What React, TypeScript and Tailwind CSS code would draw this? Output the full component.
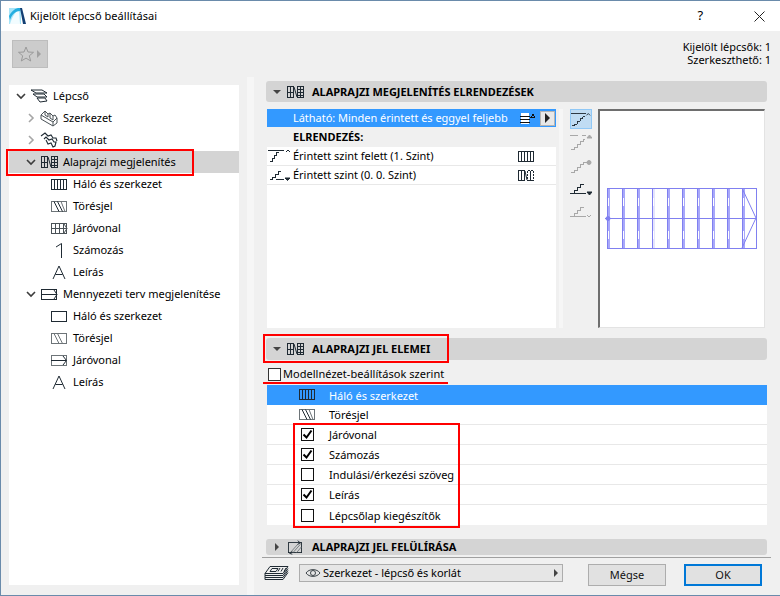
import React from "react";

const ink = "#1f2a33";

const Chevron = ({ open, light }: { open?: boolean; light?: boolean }) => (
  <svg width="10" height="10" viewBox="0 0 10 10" fill="none" stroke={light ? "#a6a6a6" : "#3c3c3c"} strokeWidth="1.6">
    {open ? <path d="M1 3 L5 7 L9 3" /> : <path d="M3 1 L7 5 L3 9" />}
  </svg>
);

const PlanIcon = () => (
  <svg width="17" height="14" viewBox="0 0 17 14" fill="none" stroke={ink} shapeRendering="crispEdges">
    <path d="M.5 1.5h6v11h-6zM.5 7.5h6M3.5 1.5v11M10.5 1.5h6v11h-6zM10.500 4.500h6M10.500 7.500h6M10.500 10.500h6M13.500 1.500v11" />
    <path d="M7 2 L10 12" shapeRendering="auto" />
  </svg>
);

const GridIcon = () => (
  <svg width="16" height="11" viewBox="0 0 16 11" fill="none" stroke={ink} shapeRendering="crispEdges">
    <path d="M.5.5h15v10H.5zM3.500.5v10M6.500.5v10M9.500.5v10M12.500.5v10" />
  </svg>
);

const BreakIcon = ({ dim }: { dim?: boolean }) => (
  <svg width="16" height="11" viewBox="0 0 16 11" fill="none" stroke="#6d7478">
    <path d="M.5.5h15v10H.5z" shapeRendering="crispEdges" />
    <path d="M3 .5 L8 10.500M6.500 .5 L11.500 10.500" stroke={dim ? "#6d7478" : ink} />
    {!dim && <path d="M10 .5 L14 10.500" />}
  </svg>
);

const WalkIcon = () => (
  <svg width="17" height="11" viewBox="0 0 17 11" fill="none" stroke="#4a5257" shapeRendering="crispEdges">
    <path d="M.5.5h15v10H.5zM4.500.5v10M8.500.5v10M12.500.5v10M0 5.500h16" />
    <path d="M13 1 L16 5.500 L13 10" shapeRendering="auto" />
  </svg>
);

const NumIcon = () => (
  <svg width="16" height="15" viewBox="0 0 16 15" fill="none" stroke={ink}>
    <path d="M10.500 .5 V15M10.500 .5 L5 4" />
  </svg>
);

const LetterIcon = () => (
  <svg width="14" height="14" viewBox="0 0 14 14" fill="none" stroke={ink}>
    <path d="M1 14 L7 1 L13 14M3.400 9.500h7.200" />
  </svg>
);

const CeilIcon = () => (
  <svg width="17" height="11" viewBox="0 0 17 11" fill="none" stroke={ink} shapeRendering="crispEdges">
    <path d="M.5.5h15v10H.5zM.5 5.500h15" />
    <path d="M13 1 L16 5.500 L13 10" shapeRendering="auto" />
  </svg>
);

const RectIcon = () => (
  <svg width="16" height="11" viewBox="0 0 16 11" fill="none" stroke={ink} shapeRendering="crispEdges">
    <path d="M.5.5h15v10H.5z" />
  </svg>
);

const ArrowLineIcon = () => (
  <svg width="16" height="11" viewBox="0 0 16 11" fill="none" stroke={ink}>
    <path d="M.5.5h15v10H.5z" stroke="#6d7478" shapeRendering="crispEdges" />
    <path d="M0 5.500h15" shapeRendering="crispEdges" />
    <path d="M12 1 L15.500 5.500 L12 10" />
  </svg>
);

const StairRootIcon = () => (
  <svg width="18" height="15" viewBox="0 0 18 15" fill="none" stroke={ink}>
    <path d="M1 1 L12 1 L17 4 L6 4 ZM3 5 L14 5 L17 8 L7 8 ZM7 9 L15 9 L17 12 L10 13 Z" />
  </svg>
);

const StructureIcon = () => (
  <svg width="18" height="17" viewBox="0 0 18 17" fill="none" stroke="#4a5257">
    <path d="M1 5 L5 1 L8 4 L10 3 L13 6 L15 5 L17 8 L17 13 L13 16 L1 9 Z" />
    <path d="M1 5 L13 12 L17 8M13 12 L13 16M5 1 L5 5 L8 7 L8 4M10 3 L10 8 L13 10 L13 6" />
  </svg>
);

const CoverIcon = () => (
  <svg width="18" height="16" viewBox="0 0 18 16" fill="none" stroke={ink} strokeWidth="1.1">
    <path d="M1 4 L5 1 L8 4 L11 3 L13 6 L16 6 L17 9M4 7 L6 5 L9 8 L12 7 L14 10 L16 10 L15 14 L13 15 L11 11 L8 12 L6 8" />
  </svg>
);

const StackIcon = () => (
  <svg width="25" height="15" viewBox="0 0 25 15" fill="none" stroke={ink}>
    <path d="M6 .5h18l-5 7H1z" />
    <path d="M1 7.500v2h18l5-7M1 9.500v2h18l5-7M1 11.500v2h18l5-7" />
    <path d="M8 2.500h6l-2 3H6z" />
    <path d="M16 2 l-2 3.500M19 2 l-2 3.500M22 2 l-2 3.500" />
  </svg>
);

const OverrideIcon = () => (
  <svg width="20" height="16" viewBox="0 0 20 16" fill="none" stroke={ink}>
    <path d="M2.500 3.500h15v11h-15z" shapeRendering="crispEdges" />
    <path d="M8 14 L16 5M12 14 L17 8M5 14 L14 4" stroke="#70777b" />
    <path d="M13 1 L16 3.500 L13 5M7 13 L4 15 L7 16" />
  </svg>
);

const Eye = () => (
  <svg width="16" height="10" viewBox="0 0 16 10" fill="none" stroke="#3c4449">
    <path d="M1 5 C4 .5 12 .5 15 5 C12 9.500 4 9.500 1 5 Z" />
    <circle cx="8" cy="5" r="2.500" />
  </svg>
);

const StairTool = ({ color, line, mark }: { color: string; line: "top" | "bottom" | "split" | "mid"; mark: "up" | "upFill" | "dot" | "downFill" | "down" }) => (
  <svg width="22" height="18" viewBox="0 0 22 18" fill="none" stroke={color} shapeRendering="crispEdges">
    <path d={line === "bottom" ? "M1 14.500 h3 v-3 h3 v-3 h3 v-3 h4" : "M1 16.500 h3 v-2 h3 v-3 h3 v-3 h3 v-2 h2"} />
    {line === "top" && <path d="M0 2.500 h16" />}
    {line === "split" && <path d="M0 2.500 h8 M12 2.500 h4" />}
    {line === "mid" && <path d="M14 6.500 h5" />}
    {line === "bottom" && <path d="M0 14.500 h16" />}
    {mark === "up" && <path d="M17 5 l2 -2 l2 2" shapeRendering="auto" />}
    {mark === "upFill" && <path d="M17 5 h5 l-2.500 -3 z" fill={color} shapeRendering="auto" />}
    {mark === "dot" && <circle cx="19" cy="6.500" r="2" fill={color} shapeRendering="auto" />}
    {mark === "downFill" && <path d="M17 13 h5 l-2.500 3 z" fill={color} shapeRendering="auto" />}
    {mark === "down" && <path d="M17 13 l2 2 l2 -2" shapeRendering="auto" />}
  </svg>
);

const Plan = () => {
  const xs = [0, 15, 30, 45, 60, 75, 90, 105, 120, 135];
  return (
    <svg width="160" height="70" viewBox="-4 -4 160 70" fill="none" stroke="#8080f0" shapeRendering="crispEdges">
      {xs.map((x) => (
        <g key={x}>
          <rect x={x} y={0} width={3} height={61} fill={x === 45 ? "#e4e4fc" : "#a8a8fa"} stroke="none" />
          <path d={`M${x + 0.5} .5v60`} />
          <path d={`M${x + 1.5} 10v8M${x + 1.5} 43v8`} stroke="#fff" />
        </g>
      ))}
      <path d="M.5 .5h149v60H.5z" />
      <path d="M-2 30.500h152" />
      <path d="M135 0 L149 30 L135 60" shapeRendering="auto" />
      <circle cx="1" cy="30.500" r="2" fill="#8080f0" shapeRendering="auto" />
    </svg>
  );
};

const StarIcon = () => (
  <svg width="16" height="16" viewBox="0 0 16 16" fill="none" stroke="#9a9a9a">
    <path d="M8 1 L10 6 L15.500 6.300 L11.300 9.800 L12.700 15 L8 12.100 L3.300 15 L4.700 9.800 L.5 6.300 L6 6 Z" />
  </svg>
);

const tree: { label: string; indent: number; chevron?: "open" | "closed"; light?: boolean; icon: React.ReactNode; active?: boolean }[] = [
  { label: "Lépcső", indent: 7, chevron: "open", icon: <StairRootIcon /> },
  { label: "Szerkezet", indent: 17, chevron: "closed", light: true, icon: <StructureIcon /> },
  { label: "Burkolat", indent: 17, chevron: "closed", light: true, icon: <CoverIcon /> },
  { label: "Alaprajzi megjelenítés", indent: 17, chevron: "open", icon: <PlanIcon />, active: true },
  { label: "Háló és szerkezet", indent: 27, icon: <GridIcon /> },
  { label: "Törésjel", indent: 27, icon: <BreakIcon /> },
  { label: "Járóvonal", indent: 27, icon: <WalkIcon /> },
  { label: "Számozás", indent: 27, icon: <NumIcon /> },
  { label: "Leírás", indent: 27, icon: <LetterIcon /> },
  { label: "Mennyezeti terv megjelenítése", indent: 17, chevron: "open", icon: <CeilIcon /> },
  { label: "Háló és szerkezet", indent: 27, icon: <RectIcon /> },
  { label: "Törésjel", indent: 27, icon: <BreakIcon dim /> },
  { label: "Járóvonal", indent: 27, icon: <ArrowLineIcon /> },
  { label: "Leírás", indent: 27, icon: <LetterIcon /> },
];

const SectionHeader = ({ title, open, icon, className }: { title: string; open?: boolean; icon: React.ReactNode; className?: string }) => (
  <div className={`flex items-center bg-[#d4d4d4] rounded-[3px] ${className ?? ""}`}>
    <span className="w-[9px] ml-[6px] flex justify-center">
      {open ? <span className="border-x-[4px] border-x-transparent border-t-[4px] border-t-[#444]" /> : <span className="border-y-[4px] border-y-transparent border-l-[4px] border-l-[#444]" />}
    </span>
    <span className="w-[18px] ml-[5px] flex justify-center">{icon}</span>
    <span className="ml-[8px] font-bold text-[11px] text-black">{title}</span>
  </div>
);

const CheckBox = ({ checked }: { checked?: boolean }) => (
  <span className="w-[13px] h-[13px] border border-[#111] bg-white flex items-center justify-center">
    {checked && (
      <svg width="11" height="11" viewBox="0 0 11 11" fill="none" stroke="#000" strokeWidth="2">
        <path d="M1.500 5.500 L4.500 8.500 L9.500 1.500" />
      </svg>
    )}
  </span>
);

const marks = [
  { label: "Járóvonal", checked: true },
  { label: "Számozás", checked: true },
  { label: "Indulási/érkezési szöveg", checked: false },
  { label: "Leírás", checked: true },
  { label: "Lépcsőlap kiegészítők", checked: false },
];

export default function App() {
  return (
    <div
      className="relative w-[780px] h-[596px] flex flex-col overflow-hidden bg-[#f0f0f0] border-l border-t border-b border-[#6a8bab] text-[11px] text-black tracking-[-0.03px]"
      style={{ fontFamily: '"Noto Sans", "Open Sans", sans-serif' }}
    >
      {/* title bar */}
      <div className="h-[30px] shrink-0 bg-white flex items-center pl-[8px]">
        <svg width="17" height="16" viewBox="0 0 17 16">
          <path d="M0 16 L0 0 L12 0 L12 16 Z" fill="#a6e4f8" />
          <path d="M1 16 C3 9 6 4 10 2 L11 16 Z" fill="#f2fcff" />
          <path d="M0 8 C2 4 5 1 9 0 L12 0 L11 3 C7 3 3 6 1 12 Z" fill="#23aee0" />
          <path d="M11 0 L13 0 L17 16 L14 16 Z" fill="#123f73" />
        </svg>
        <span className="ml-[4px] text-[11px] tracking-[0.05px]">Kijelölt lépcső beállításai</span>
        <span className="ml-auto text-[13px] mr-[51px]">?</span>
        <svg className="mr-[15px]" width="11" height="11" viewBox="0 0 11 11" fill="none" stroke="#222">
          <path d="M.5 .5 L10.500 10.500M10.500 .5 L.5 10.500" />
        </svg>
      </div>

      {/* top strip */}
      <div className="h-[46px] shrink-0 flex items-start pl-[11px] pr-[9px]">
        <div className="mt-[9px] w-[36px] h-[28px] bg-[#cccccc] border border-[#bdbdbd] flex items-center pl-[5px] gap-[3px]">
          <StarIcon />
          <span className="border-y-[4px] border-y-transparent border-l-[4px] border-l-[#a0a0a0]" />
        </div>
        <div className="ml-auto mt-[9px] text-right leading-[13px]">
          <div>Kijelölt lépcsők: 1</div>
          <div>Szerkeszthető: 1</div>
        </div>
      </div>

      <div className="flex-1 flex min-h-0">
        {/* tree */}
        <div className="w-[246px] shrink-0 pl-[8px] pr-[8px] pt-[8px] pb-[10px]">
          <div className="h-full bg-white">
            {tree.map((row, i) => (
              <div key={i} className={`h-[22px] flex items-center ${row.active ? "bg-[#d4d4d4]" : ""}`}>
                <span className="flex justify-start w-[10px]" style={{ marginLeft: row.indent }}>
                  {row.chevron && <Chevron open={row.chevron === "open"} light={row.light} />}
                </span>
                <span className={`flex justify-center shrink-0 ${row.chevron ? "w-[22px] ml-[2px]" : "w-[18px] ml-[4px]"}`}>{row.icon}</span>
                <span className={row.chevron ? "ml-[3px] whitespace-nowrap" : "ml-[5px] whitespace-nowrap"}>{row.label}</span>
              </div>
            ))}
          </div>
        </div>
        <div className="w-[7px] shrink-0 bg-[#f6f6f6]" />

        {/* right side */}
        <div className="flex-1 flex flex-col pt-[4px] pl-[12px] pr-[13px]">
          <SectionHeader className="h-[21px] pt-[1px]" title="ALAPRAJZI MEGJELENÍTÉS ELRENDEZÉSEK" open icon={<PlanIcon />} />
          <div className="flex mt-[7px] h-[219px] pl-[1px]">
            <div className="w-[289px] shrink-0 flex flex-col">
              <div className="h-[18px] bg-[#3399ff] flex items-center text-white pl-[26px]">
                <span className="whitespace-nowrap">Látható: Minden érintett és eggyel feljebb</span>
                <span className="ml-auto flex items-center gap-[5px] pr-[1px]">
                  <svg width="15" height="13" viewBox="0 0 15 13" fill="none">
                    <path d="M1 1h8v11H1z" fill="#fff" />
                    <path d="M0 4.500h10M0 7.500h10M0 10.500h10M11 5.500l2-3 2 3z" stroke="#111" shapeRendering="crispEdges" />
                  </svg>
                  <span className="w-[15px] h-[15px] bg-[#e8e8e8] border border-[#b5b5b5] flex items-center justify-center">
                    <span className="border-y-[5px] border-y-transparent border-l-[5px] border-l-[#222]" />
                  </span>
                </span>
              </div>
              <div className="h-[20px] flex items-center pl-[26px] font-bold">ELRENDEZÉS:</div>
              <div className="flex-1 bg-white">
                <div className="h-[19px] flex items-center border-b border-[#e8e8e8]">
                  <span className="w-[26px] pl-[1px] flex shrink-0">
                    <svg width="22" height="14" viewBox="0 0 22 14" fill="none" stroke={ink} shapeRendering="crispEdges">
                      <path d="M0 1.500h16M2 12.500h2v-3h2v-3h2v-3h3" />
                      <path d="M18 3l2-2 2 2" shapeRendering="auto" />
                    </svg>
                  </span>
                  <span className="whitespace-nowrap">Érintett szint felett (1. Szint)</span>
                  <span className="ml-auto mr-[22px]"><GridIcon /></span>
                </div>
                <div className="h-[19px] flex items-center border-b border-[#e8e8e8]">
                  <span className="w-[26px] pl-[1px] flex shrink-0">
                    <svg width="22" height="14" viewBox="0 0 22 14" fill="none" stroke={ink} shapeRendering="crispEdges">
                      <path d="M2 11.500h2v-2h3v-3h3v-3h3M8 11.500h8" />
                      <path d="M17 10h5l-2.500 2.500z" fill={ink} shapeRendering="auto" />
                    </svg>
                  </span>
                  <span className="whitespace-nowrap">Érintett szint (0. 0. Szint)</span>
                  <span className="ml-auto mr-[22px]">
                    <svg width="16" height="11" viewBox="0 0 16 11" fill="none" stroke={ink} shapeRendering="crispEdges">
                      <path d="M.5.5h6v10h-6zM3.500.5v10M12.500.5v10" />
                      <path d="M9.500.5v10M15.500.5v10M9.500.5h6M9.500 10.500h6" strokeDasharray="2 1" />
                      <path d="M7 1 L9 10" shapeRendering="auto" />
                    </svg>
                  </span>
                </div>
              </div>
            </div>
            <div className="w-[4px] ml-[3px] bg-[#f6f6f6]" />
            <div className="w-[22px] ml-[7px] flex flex-col gap-[3px]">
              <div className="h-[20px] bg-[#c0dcf3] border border-[#90c8f6] flex items-center justify-center"><StairTool color={ink} line="top" mark="up" /></div>
              <div className="h-[20px] flex items-center justify-center"><StairTool color="#a8a8a8" line="split" mark="upFill" /></div>
              <div className="h-[20px] flex items-center justify-center"><StairTool color="#a8a8a8" line="mid" mark="dot" /></div>
              <div className="h-[20px] flex items-center justify-center"><StairTool color={ink} line="bottom" mark="downFill" /></div>
              <div className="h-[20px] flex items-center justify-center"><StairTool color="#a8a8a8" line="bottom" mark="down" /></div>
            </div>
            <div className="w-[167px] ml-[6px] bg-white border-t-2 border-l-2 border-t-[#6e6e6e] border-l-[#6e6e6e] border-r border-b border-r-[#e3e3e3] border-b-[#e3e3e3] flex items-center justify-center pl-[2px]">
              <Plan />
            </div>
          </div>

          <SectionHeader className="h-[22px] mt-[10px]" title="ALAPRAJZI JEL ELEMEI" open icon={<PlanIcon />} />
          <div className="h-[25px] flex items-center pt-[4px] pl-[2px] gap-[2px]">
            <span className="w-[13px] h-[13px] border border-[#333] bg-white" />
            <span className="whitespace-nowrap tracking-[0.03px]">Modellnézet-beállítások szerint</span>
          </div>
          <div className="pl-[1px]">
            <div className="h-[20px] bg-[#3399ff] text-white flex items-center pt-[2px]">
              <span className="w-[62px] pl-[32px] flex items-center -mt-[3px]"><GridIcon /></span>
              <span>Háló és szerkezet</span>
            </div>
            <div className="bg-white">
              <div className="h-[20px] flex items-center border-b border-[#e8e8e8] pt-[2px]">
                <span className="w-[62px] pl-[32px] flex items-center -mt-[3px]"><BreakIcon /></span>
                <span>Törésjel</span>
              </div>
              {marks.map((m) => (
                <div key={m.label} className="h-[20px] flex items-center border-b border-[#e8e8e8] last:border-b-0 pt-[2px]">
                  <span className="w-[62px] pl-[34px] flex items-center -mt-[2px]"><CheckBox checked={m.checked} /></span>
                  <span className="whitespace-nowrap">{m.label}</span>
                </div>
              ))}
            </div>
          </div>

          <SectionHeader className="h-[16px] mt-[14px]" title="ALAPRAJZI JEL FELÜLÍRÁSA" icon={<OverrideIcon />} />
          <div className="mt-[2px] -mx-[4px] border-t border-[#a0a0a0] flex items-start pt-[6px]">
            <span className="ml-[2px] mt-[2px] w-[26px]"><StackIcon /></span>
            <div className="ml-[9px] w-[264px] h-[18px] bg-[#e6e6e6] border border-[#adadad] flex items-center pl-[5px]">
              <Eye />
              <span className="ml-[2px] whitespace-nowrap">Szerkezet - lépcső és korlát</span>
              <span className="ml-auto mr-[4px] border-y-[4px] border-y-transparent border-l-[4px] border-l-[#444]" />
            </div>
            <button className="ml-[25px] w-[78px] h-[22px] bg-[#e1e1e1] border border-[#adadad] text-[#111]">Mégse</button>
            <button className="ml-[18px] w-[78px] h-[22px] bg-[#e1e1e1] border-2 border-[#0078d7] text-[#111]">OK</button>
          </div>
        </div>
      </div>

      {/* annotation boxes */}
      <span className="absolute left-[5px] top-[148px] w-[188px] h-[27px] border-2 border-[#ff0000]" />
      <span className="absolute left-[262px] top-[333px] w-[186px] h-[29px] border-2 border-[#ff0000]" />
      <span className="absolute left-[262px] top-[381px] w-[185px] h-[2px] bg-[#ff0000]" />
      <span className="absolute left-[292px] top-[422px] w-[167px] h-[105px] border-2 border-[#ff0000]" />
    </div>
  );
}
